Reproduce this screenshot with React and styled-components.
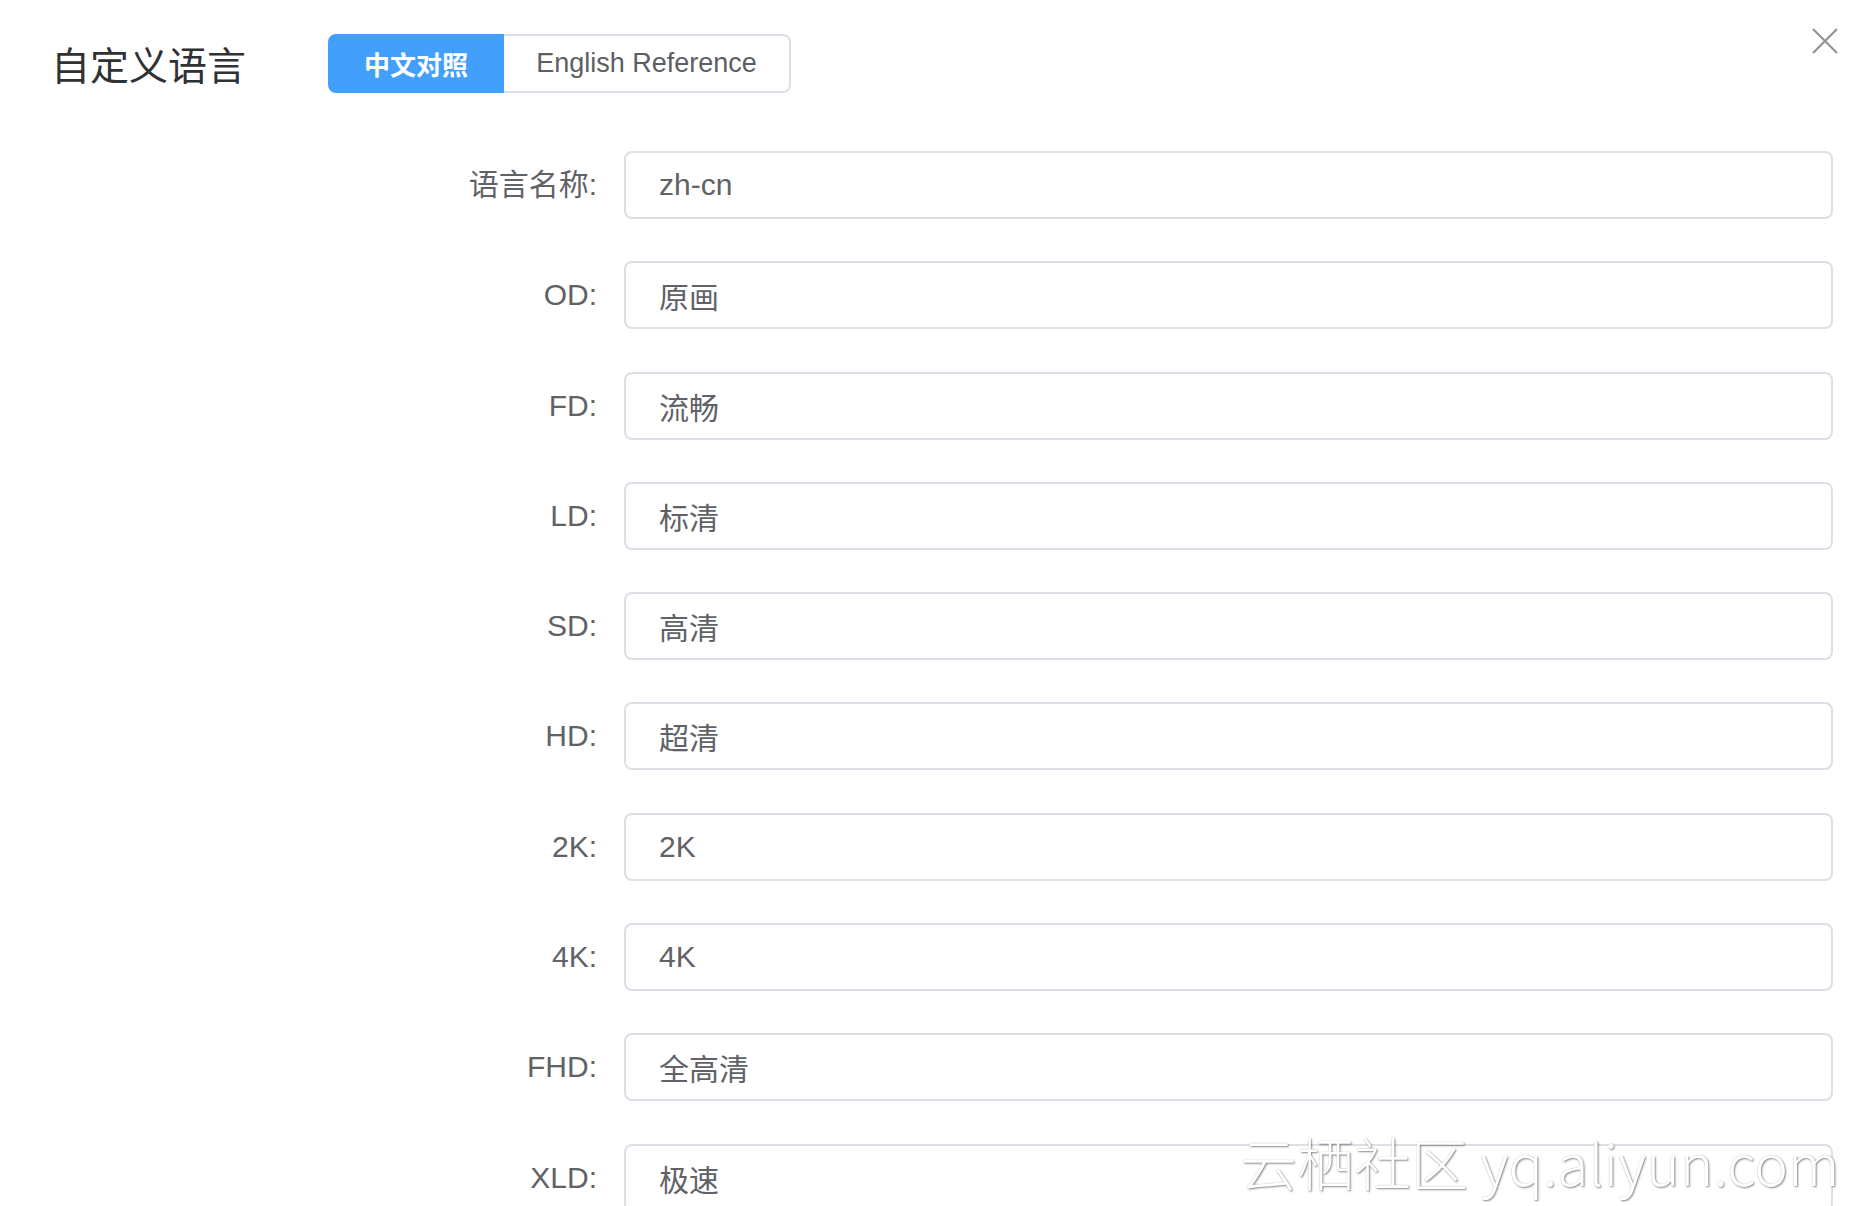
import React from 'react';
import styled, { createGlobalStyle } from 'styled-components';

const fields = [
  { label: '语言名称:', value: 'zh-cn' },
  { label: 'OD:', value: '原画' },
  { label: 'FD:', value: '流畅' },
  { label: 'LD:', value: '标清' },
  { label: 'SD:', value: '高清' },
  { label: 'HD:', value: '超清' },
  { label: '2K:', value: '2K' },
  { label: '4K:', value: '4K' },
  { label: 'FHD:', value: '全高清' },
  { label: 'XLD:', value: '极速' },
];

function App() {
  return (
    <>
      <GlobalStyle />
      <Dialog>
        <Header>
          <Title>自定义语言</Title>
          <Segmented>
            <SegmentButton active>中文对照</SegmentButton>
            <SegmentButton>English Reference</SegmentButton>
          </Segmented>
        </Header>
        <CloseButton aria-label="close">
          <svg width="26" height="26" viewBox="0 0 26 26">
            <path d="M1 1 L25 25 M25 1 L1 25" stroke="#909399" strokeWidth="2.2" fill="none" />
          </svg>
        </CloseButton>
        <Form>
          {fields.map((f) => (
            <React.Fragment key={f.label}>
              <Label>{f.label}</Label>
              <Input defaultValue={f.value} readOnly />
            </React.Fragment>
          ))}
        </Form>
        <Watermark>云栖社区 yq.aliyun.com</Watermark>
      </Dialog>
    </>
  );
}

export default App;

const GlobalStyle = createGlobalStyle`
html, body {
  margin: 0;
  padding: 0;
  background: #ffffff;
  overflow: hidden;
}
body {
  font-family: "Liberation Sans", "Noto Sans CJK SC", sans-serif;
}
#root {
  height: 1206px;
}
`

const Dialog = styled.div`
position: relative;
height: 1206px;
box-sizing: border-box;
padding: 34px 31px 0 0;
overflow: hidden;
`

const Header = styled.div`
display: flex;
flex-direction: row;
align-items: center;
height: 59px;
padding-left: 51px;
`

const Title = styled.div`
font-family: "Noto Sans CJK SC", sans-serif;
font-size: 39px;
color: #303133;
width: 277px;
line-height: 1;
`

const Segmented = styled.div`
display: flex;
flex-direction: row;
height: 59px;
`

const SegmentButton = styled.div`
display: flex;
align-items: center;
justify-content: center;
box-sizing: border-box;
height: 59px;
white-space: nowrap;
font-size: ${(p) => (p.active ? '26px' : '27px')};
font-weight: ${(p) => (p.active ? 700 : 400)};
font-family: ${(p) => (p.active ? '"Noto Sans CJK SC", sans-serif' : '"Liberation Sans", sans-serif')};
color: ${(p) => (p.active ? '#ffffff' : '#5c5e63')};
background: ${(p) => (p.active ? '#439ffc' : '#ffffff')};
border: 2px solid ${(p) => (p.active ? '#439ffc' : '#dcdfe6')};
border-radius: ${(p) => (p.active ? '8px 0 0 8px' : '0 8px 8px 0')};
border-left-width: ${(p) => (p.active ? '2px' : '0')};
width: ${(p) => (p.active ? '176px' : '287px')};
`

const CloseButton = styled.button`
position: absolute;
top: 28px;
right: 26px;
width: 26px;
height: 26px;
padding: 0;
border: none;
background: transparent;
display: flex;
`

const Form = styled.div`
display: grid;
grid-template-columns: 597px 1fr;
column-gap: 27px;
row-gap: 42.3px;
align-items: center;
margin-top: 58px;
`

const Label = styled.div`
text-align: right;
font-size: 30px;
color: #606266;
line-height: 1;
`

const Input = styled.input`
box-sizing: border-box;
width: 100%;
height: 68px;
padding: 0 0 0 33px;
border: 2px solid #dcdfe6;
border-radius: 8px;
font-family: "Liberation Sans", "Noto Sans CJK SC", sans-serif;
font-size: 30px;
color: #606266;
background: #ffffff;
outline: none;
`

const Watermark = styled.div`
position: absolute;
left: 1240px;
top: 1120px;
font-family: "Noto Sans CJK SC", sans-serif;
font-size: 57px;
font-weight: 300;
color: #ffffff;
text-shadow: 1px 1px 2px rgba(0, 0, 0, 0.45), 0 0 1px rgba(0, 0, 0, 0.25);
white-space: nowrap;
pointer-events: none;
`
